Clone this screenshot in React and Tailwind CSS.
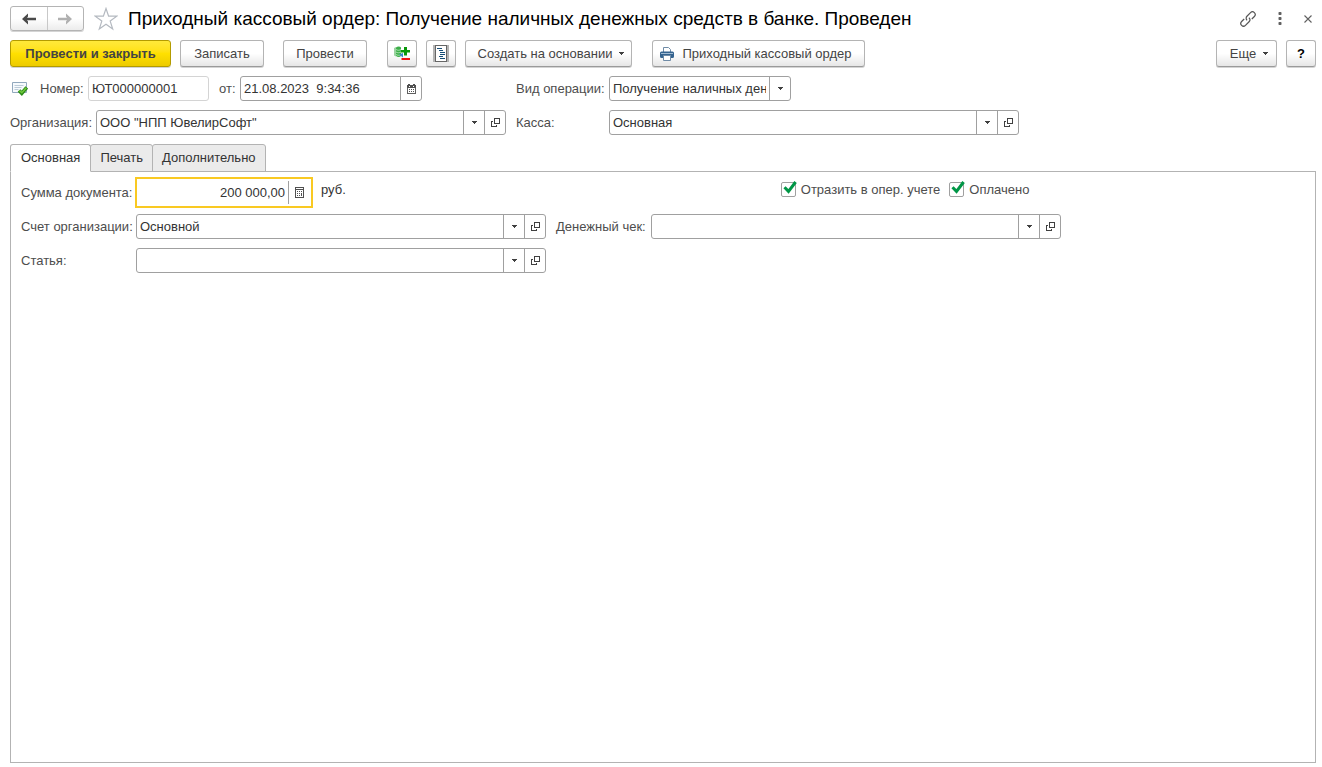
import { useState } from 'react';

const fieldBox = 'flex h-[25px] rounded-[3px] border border-[#a0a0a0] bg-white';
const fieldText = 'min-w-0 flex-1 bg-transparent px-[3px] text-[13px] text-[#333] outline-none';
const fieldButton = 'flex w-[21px] shrink-0 items-center justify-center border-l border-[#a0a0a0] text-[#404040]';
const toolButton =
  'flex h-[27px] shrink-0 items-center justify-center rounded-[3px] border border-[#b4b4b4] border-b-[#9a9a9a] bg-linear-to-b from-white from-50% to-[#e6e6e6] text-[13px] text-[#444] shadow-[0_1px_0_#d4d4d4]';

function Caret() {
  return (
    <svg width="5" height="3" viewBox="0 0 5 3" aria-hidden="true" shapeRendering="crispEdges">
      <path d="M0 0h5v1H0zM1 1h3v1H1zM2 2h1v1H2z" fill="#404040" />
    </svg>
  );
}

function OpenIcon() {
  return (
    <svg width="9" height="9" viewBox="0 0 9 9" fill="none" stroke="#404040" aria-hidden="true" shapeRendering="crispEdges">
      <path d="M3.5 .5h5v5h-5zM2 3.5H.5v5h5V7" />
    </svg>
  );
}

function CalendarIcon() {
  return (
    <svg width="9" height="10" viewBox="0 0 9 10" aria-hidden="true" shapeRendering="crispEdges">
      <path d="M0 1h9v3H0zM1 0h2v1H1zM6 0h2v1H6z" fill="#505050" />
      <path d="M0 4h1v6H0zM8 4h1v6H8zM1 9h7v1H1z" fill="#606060" />
      <path d="M2 2h1v1H2zM6 2h1v1H6z" fill="#fff" />
      <path d="M2 5h1v1H2zM4 5h1v1H4zM6 5h1v1H6zM2 7h1v1H2zM4 7h1v1H4zM6 7h1v1H6z" fill="#505050" />
    </svg>
  );
}

function CalculatorIcon() {
  return (
    <svg width="9" height="11" viewBox="0 0 9 11" aria-hidden="true" shapeRendering="crispEdges" fill="#505050">
      <path d="M0 0h9v11H0zM1 1v1h7V1zM1 3v7h7V3z" fillRule="evenodd" />
      <path d="M2 4h1v1H2zM4 4h1v1H4zM6 4h1v1H6zM2 6h1v1H2zM4 6h1v1H4zM6 6h1v3H6zM2 8h1v1H2zM4 8h1v1H4z" />
    </svg>
  );
}

function ArrowIcon({ className }) {
  return (
    <svg className={className} width="14" height="12" viewBox="0 0 14 12" aria-hidden="true">
      <path d="M0 6 6 .5V3.500L5 4.700H14v2.600H5l1 1.200v3z" fill="currentColor" />
    </svg>
  );
}

function StarIcon() {
  return (
    <svg width="24" height="24" viewBox="0 0 24 24" fill="none" stroke="#b4b9c0" strokeWidth="1.200" aria-hidden="true">
      <path d="M12 1.500 14.600 9.200H22.800l-6.600 4.900 2.500 7.900-6.700-4.800L5.300 22l2.500-7.900L1.200 9.200h8.200z" />
    </svg>
  );
}

function LinkIcon() {
  return (
    <svg width="16" height="16" viewBox="0 0 16 16" fill="none" stroke="#555" strokeWidth="1.200" aria-hidden="true">
      <g transform="rotate(-45 8 8)">
        <path d="M6.500 8.300V8a2.700 2.700 0 0 1 2.700-2.700h5.100a2.700 2.700 0 0 1 0 5.400h-3.600" />
        <path d="M9.500 7.700V8a2.700 2.700 0 0 1-2.700 2.700H1.700a2.700 2.700 0 0 1 0-5.400h3.600" />
      </g>
    </svg>
  );
}

function MovementsIcon() {
  return (
    <svg width="16" height="15" viewBox="0 0 16 15" aria-hidden="true">
      <path d="M0 2 2 1v9.500L0 9.500z" fill="#9ad3a0" />
      <path d="M2 1.500C3.500 0 6 0 7 1.500V10c-1 1.300-3.500 1.300-5 0z" fill="#3cae48" />
      <path d="M2 3.500c1.500 1 3.500 1 5 0M2 6c1.500 1 3.500 1 5 0M2 8.500c1.500 1 3.500 1 5 0" stroke="#c4edc8" strokeWidth=".8" fill="none" />
      <path d="M10 1h3v3h3v2.500h-3v3h-3v-3H7V4h3z" fill="#0a980a" />
      <path d="M5 8.500 9 7v4.500z" fill="#3b87c8" />
      <path d="M7.500 12H16v2H7.500z" fill="#f01010" />
    </svg>
  );
}

function JournalIcon() {
  return (
    <svg width="16" height="17" viewBox="0 0 16 17" aria-hidden="true" shapeRendering="crispEdges">
      <path d="M0 0h16v17H0z" fill="#b4b4b4" />
      <path d="M2.500 .5h11v16h-11z" fill="#fff" stroke="#666" />
      <path d="M4 3h5v1H4zM6 5h4v1H6zM7 7h5v1H7zM7 9h5v1H7zM6 11h4v1H6zM7 13h5v1H7z" fill="#174f78" />
    </svg>
  );
}

function PrinterIcon() {
  return (
    <svg width="14" height="14" viewBox="0 0 14 14" aria-hidden="true">
      <path d="M3.500 5V.5h5l2 2V5" fill="#fff" stroke="#6f8ba6" />
      <path d="M1.500 4.500h11A1.500 1.500 0 0 1 14 6v3.500a1.500 1.500 0 0 1-1.500 1.500h-11A1.500 1.500 0 0 1 0 9.500V6a1.500 1.500 0 0 1 1.500-1.500z" fill="#34638f" />
      <path d="M1 6.500h12" stroke="#9fbad3" />
      <path d="M3.500 8.500h7v5h-7z" fill="#fff" stroke="#6f8ba6" />
    </svg>
  );
}

function PostedIcon() {
  return (
    <svg width="16" height="14" viewBox="0 0 16 14" aria-hidden="true">
      <path d="M.5 .5h14v10H.5z" fill="#f6fafd" stroke="#91a8bd" />
      <path d="M2.500 3.500h9M2.500 5.500h7M2.500 7.500h4" stroke="#bccbd8" />
      <path d="m7 8.500 2.800 2.800L14.800 5.500" fill="none" stroke="#2c8a17" strokeWidth="3.600" />
      <path d="m7.300 8.500 2.500 2.200 4.500-5" fill="none" stroke="#6fc83c" strokeWidth="1.600" />
    </svg>
  );
}

function LookupField({ id, value, label }) {
  return (
    <div className={`${fieldBox} w-[410px]`}>
      <input id={id} type="text" defaultValue={value} className={fieldText} />
      <button type="button" aria-label={`${label}: выбрать`} className={fieldButton}>
        <Caret />
      </button>
      <button type="button" aria-label={`${label}: открыть`} className={fieldButton}>
        <OpenIcon />
      </button>
    </div>
  );
}

function Check({ id, children }) {
  return (
    <div className="flex items-center gap-[5px]">
      <span className="relative flex">
        <input
          id={id}
          type="checkbox"
          defaultChecked
          className="peer size-[15px] appearance-none rounded-[2px] border border-[#a0a0a0] bg-white"
        />
        <svg
          className="pointer-events-none absolute -top-px left-[2px] hidden peer-checked:block"
          width="14"
          height="13"
          viewBox="0 0 14 13"
          fill="none"
          stroke="#009646"
          strokeWidth="3"
          aria-hidden="true"
        >
          <path d="m1.500 6.200 4 4.200L12.600 1" />
        </svg>
      </span>
      <label htmlFor={id}>{children}</label>
    </div>
  );
}

const tabs = ['Основная', 'Печать', 'Дополнительно'];

export default function App() {
  const [active, setActive] = useState(tabs[0]);

  return (
    <main className="flex min-h-screen flex-col bg-white pt-[6px] pr-[6px] pb-1 pl-[10px] font-['Liberation_Sans',Arial,sans-serif] text-[13px] leading-[15px] text-[#4d4d4d]">
      <header className="flex h-[25px] items-center">
        <div className="flex h-[25px] w-[74px] shrink-0 rounded-[3px] border border-[#b4b4b4] bg-linear-to-b from-white from-50% to-[#ececec] shadow-[0_1px_0_#d4d4d4]">
          <button type="button" aria-label="Назад" className="flex flex-1 items-center justify-center border-r border-[#c8c8c8]">
            <ArrowIcon className="text-[#4a4a4a]" />
          </button>
          <button type="button" aria-label="Вперед" className="flex flex-1 items-center justify-center">
            <ArrowIcon className="rotate-180 text-[#b0b0b0]" />
          </button>
        </div>
        <button type="button" aria-label="В избранное" className="ml-[10px] shrink-0">
          <StarIcon />
        </button>
        <h1 className="ml-[10px] text-[19px] leading-6 whitespace-nowrap text-black">
          Приходный кассовый ордер: Получение наличных денежных средств в банке. Проведен
        </h1>
        <div className="ml-auto flex items-center gap-[22px]">
          <button type="button" aria-label="Получить ссылку">
            <LinkIcon />
          </button>
          <button type="button" aria-label="Дополнительные действия">
            <svg width="4" height="13" viewBox="0 0 4 13" fill="#606060" aria-hidden="true">
              <rect x=".5" y="0" width="3" height="3" rx=".8" />
              <rect x=".5" y="5" width="3" height="3" rx=".8" />
              <rect x=".5" y="10" width="3" height="3" rx=".8" />
            </svg>
          </button>
          <button type="button" aria-label="Закрыть" className="mr-1">
            <svg width="8" height="8" viewBox="0 0 8 8" stroke="#606060" strokeWidth="1.100" aria-hidden="true">
              <path d="m.5 .5 7 7M7.500 .5l-7 7" />
            </svg>
          </button>
        </div>
      </header>

      <div role="toolbar" aria-label="Команды" className="mt-[9px] flex">
        <button
          type="button"
          className="flex h-[27px] w-[161px] shrink-0 items-center justify-center rounded-[3px] border border-[#b39b00] bg-linear-to-b from-[#ffe93a] via-[#ffe000] to-[#edcb00] text-[13px] font-bold text-[#444] shadow-[0_1px_0_#d4d4d4]"
        >
          Провести и закрыть
        </button>
        <button type="button" className={`${toolButton} ml-[9px] w-[84px]`}>
          Записать
        </button>
        <button type="button" className={`${toolButton} ml-[19px] w-[84px]`}>
          Провести
        </button>
        <button type="button" aria-label="Движения документа" className={`${toolButton} ml-[20px] w-[30px]`}>
          <MovementsIcon />
        </button>
        <button type="button" aria-label="Структура подчиненности" className={`${toolButton} ml-[9px] w-[30px]`}>
          <JournalIcon />
        </button>
        <button type="button" className={`${toolButton} ml-[9px] w-[167px] gap-[7px] pl-[5px]`}>
          Создать на основании
          <Caret />
        </button>
        <button type="button" className={`${toolButton} ml-[20px] w-[213px] gap-[8px] pr-[5px]`}>
          <PrinterIcon />
          Приходный кассовый ордер
        </button>
        <button type="button" className={`${toolButton} ml-auto w-[61px] gap-[7px] pl-[5px]`}>
          Еще
          <Caret />
        </button>
        <button type="button" aria-label="Справка" className={`${toolButton} ml-[9px] w-[30px] font-bold text-black`}>
          ?
        </button>
      </div>

      <div className="mt-[9px] flex items-center">
        <div className="flex w-[506px] shrink-0 items-center">
          <span className="w-[30px] pl-[2px]">
            <PostedIcon />
          </span>
          <label htmlFor="number" className="w-[48px]">
            Номер:
          </label>
          <div className="flex h-[25px] w-[121px] rounded-[3px] border border-[#d4d4d4]">
            <input id="number" type="text" defaultValue="ЮТ000000001" className={fieldText} />
          </div>
          <label htmlFor="date" className="ml-[10px] w-[21px]">
            от:
          </label>
          <div className={`${fieldBox} w-[182px]`}>
            <input id="date" type="text" defaultValue="21.08.2023  9:34:36" className={`${fieldText} whitespace-pre`} />
            <button type="button" aria-label="Выбрать дату" className={fieldButton}>
              <CalendarIcon />
            </button>
          </div>
        </div>
        <label htmlFor="operation" className="w-[93px] whitespace-nowrap">
          Вид операции:
        </label>
        <div className={`${fieldBox} relative w-[182px]`}>
          <select id="operation" className="w-full appearance-none bg-transparent pr-[24px] pl-[3px] text-[13px] text-[#333] outline-none">
            <option>Получение наличных денежных средств в банке</option>
          </select>
          <span className={`${fieldButton} pointer-events-none absolute inset-y-0 right-0`}>
            <Caret />
          </span>
        </div>
      </div>

      <div className="mt-[9px] flex items-center">
        <div className="flex w-[506px] shrink-0 items-center">
          <label htmlFor="organization" className="w-[86px] whitespace-nowrap">
            Организация:
          </label>
          <LookupField id="organization" label="Организация" value={'ООО "НПП ЮвелирСофт"'} />
        </div>
        <label htmlFor="cashbox" className="w-[93px]">
          Касса:
        </label>
        <LookupField id="cashbox" label="Касса" value="Основная" />
      </div>

      <div role="tablist" className="mt-[9px] flex h-[28px]">
        {tabs.map((tab) => (
          <button
            key={tab}
            type="button"
            role="tab"
            aria-selected={tab === active}
            onClick={() => setActive(tab)}
            className={`-mr-px rounded-t-[3px] border border-[#b3b3b3] px-[9px] pb-[2px] text-[13px] text-[#333] first:px-[10px] ${
              tab === active ? 'z-10 border-b-white bg-white' : 'bg-[#ebebeb]'
            }`}
          >
            {tab}
          </button>
        ))}
      </div>

      <section role="tabpanel" aria-label={active} className="-mt-px flex-1 border border-[#b3b3b3] px-[10px] pt-[5px]">
        {active === tabs[0] && (
          <>
            <div className="flex h-[31px] items-center">
              <label htmlFor="amount" className="w-[114px] whitespace-nowrap">
                Сумма документа:
              </label>
              <div className="flex h-[31px] w-[178px] items-center border-2 border-[#f9c922] bg-white pr-[2px]">
                <input id="amount" type="text" defaultValue="200 000,00" className={`${fieldText} text-right`} />
                <button type="button" aria-label="Калькулятор" className={`${fieldButton} h-[23px]`}>
                  <CalculatorIcon />
                </button>
              </div>
              <span className="ml-[8px] pb-[6px] text-[#333]">руб.</span>
              <div className="ml-[435px] flex gap-[9px] pb-[6px]">
                <Check id="reflect">Отразить в опер. учете</Check>
                <Check id="paid">Оплачено</Check>
              </div>
            </div>
            <div className="mt-[6px] flex items-center">
              <div className="flex w-[535px] shrink-0 items-center">
                <label htmlFor="account" className="w-[115px] whitespace-nowrap">
                  Счет организации:
                </label>
                <LookupField id="account" label="Счет организации" value="Основной" />
              </div>
              <label htmlFor="cheque" className="w-[95px] whitespace-nowrap">
                Денежный чек:
              </label>
              <LookupField id="cheque" label="Денежный чек" value="" />
            </div>
            <div className="mt-[9px] flex items-center">
              <label htmlFor="item" className="w-[115px]">
                Статья:
              </label>
              <LookupField id="item" label="Статья" value="" />
            </div>
          </>
        )}
      </section>
    </main>
  );
}
